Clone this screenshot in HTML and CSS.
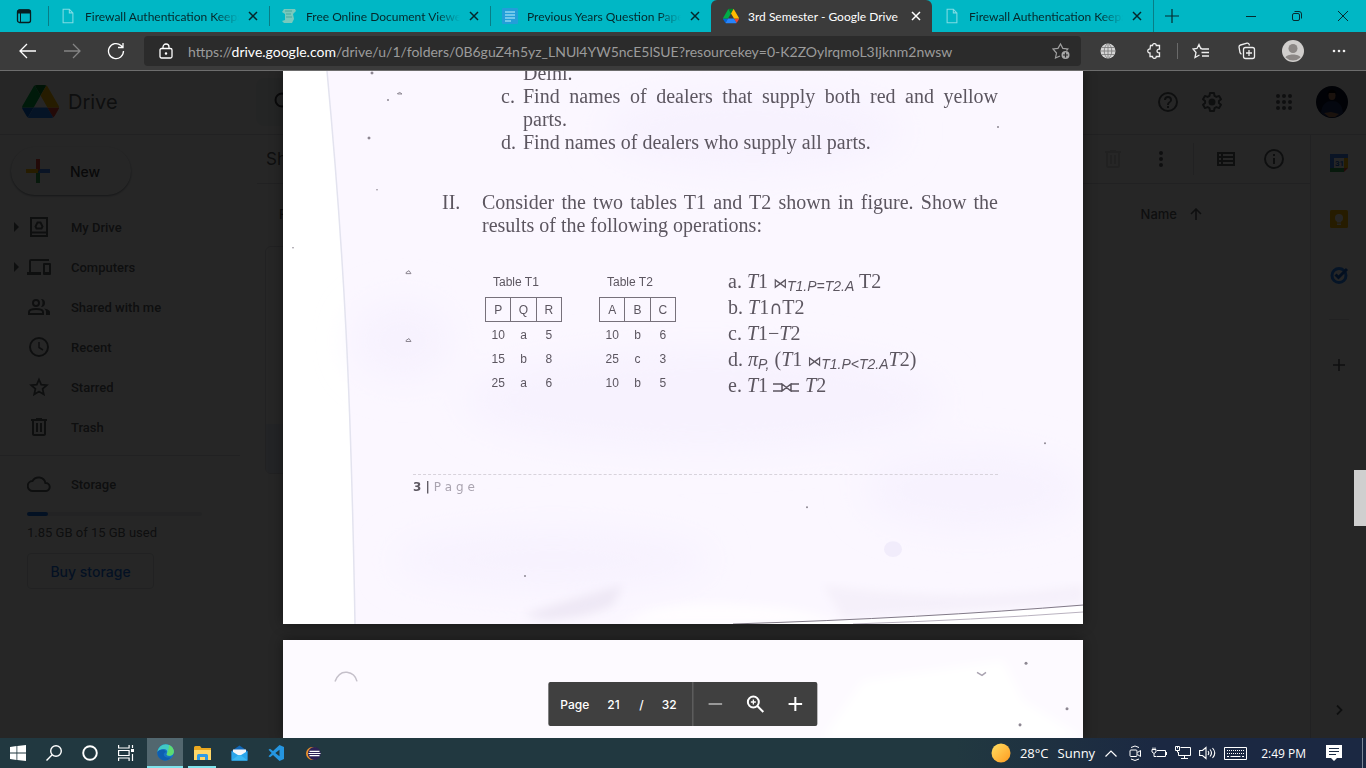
FILE: index.html
```html
<!DOCTYPE html>
<html lang="en">
<head>
<meta charset="utf-8">
<title>3rd Semester - Google Drive</title>
<meta name="viewport" content="width=device-width, initial-scale=1">
<link rel="stylesheet" href="styles.css">
</head>
<body>
<svg class="defs" aria-hidden="true">
  <defs>
    <symbol id="x" viewBox="0 0 10 10"><path d="M1 1l8 8M9 1l-8 8" fill="none" stroke="currentColor" stroke-width="1.5"/></symbol>
    <symbol id="blank" viewBox="0 0 16 18"><path d="M2.5 1.5h7l4 4v11h-11zM9.500 1.500v4h4" fill="none" stroke="#7fdbe3" stroke-width="1.200"/></symbol>
    <symbol id="drive" viewBox="0 0 87 78">
      <path fill="#0066da" d="M6.600 66.850l3.850 6.650c.8 1.400 1.950 2.500 3.300 3.300l13.750-23.800H0c0 1.550.4 3.100 1.200 4.500z"/>
      <path fill="#00ac47" d="M43.650 25L29.900 1.200c-1.350.8-2.500 1.900-3.300 3.300L1.200 48.500A9.060 9.060 0 0 0 0 53h27.500z"/>
      <path fill="#ea4335" d="M73.550 76.800c1.350-.8 2.500-1.900 3.300-3.300l1.600-2.750L86.100 57.500c.8-1.400 1.200-2.950 1.200-4.500H59.800l5.850 11.500z"/>
      <path fill="#00832d" d="M43.650 25L57.400 1.200C56.050.4 54.500 0 52.900 0H34.400c-1.600 0-3.150.450-4.500 1.200z"/>
      <path fill="#2684fc" d="M59.800 53H27.500L13.750 76.800c1.350.8 2.900 1.200 4.500 1.200h50.800c1.600 0 3.150-.450 4.500-1.200z"/>
      <path fill="#ffba00" d="M73.400 26.500L60.700 4.500c-.8-1.400-1.950-2.500-3.300-3.300L43.650 25l16.150 28h27.450c0-1.550-.4-3.100-1.200-4.500z"/>
    </symbol>
    <symbol id="trash" viewBox="0 0 24 24"><path fill="currentColor" d="M15 4V3H9v1H4v2h1v13c0 1.100.9 2 2 2h10c1.100 0 2-.9 2-2V6h1V4zm2 15H7V6h10zM9 8h2v9H9zm4 0h2v9h-2z"/></symbol>
  </defs>
</svg>

<header class="browser">
  <nav class="tabs" aria-label="Tabs">
    <button class="tab-actions" aria-label="Tab actions"><svg width="16" height="16" viewBox="0 0 16 16"><rect x="1.500" y="2" width="13" height="12.500" rx="2" fill="none" stroke="#071e20" stroke-width="1.300"/><path d="M1 5.500V4a2.500 2.500 0 0 1 2.500-2.500h9A2.500 2.500 0 0 1 15 4v1.500z" fill="#071e20"/><path d="M4.500 5v9" stroke="#071e20"/></svg></button>
    <div class="tab"><svg class="fav"><use href="#blank"/></svg><a class="tab-title" href="#t1">Firewall Authentication Keepa</a><button class="close" aria-label="Close tab"><svg><use href="#x"/></svg></button></div>
    <div class="tab"><svg class="fav" viewBox="0 0 16 16"><path d="M3 1h11l1 2-2 2-1 1 1 5-2 4H3L1 13l3-1V6L1 4z" fill="#79c9bd"/><path d="M4 3h7M5 6h5M5 9h6" stroke="#4aa79c"/></svg><a class="tab-title" href="#t2">Free Online Document Viewe</a><button class="close" aria-label="Close tab"><svg><use href="#x"/></svg></button></div>
    <div class="tab"><svg class="fav" viewBox="0 0 16 16"><rect width="16" height="16" rx="1" fill="#229ed9"/><path d="M3 4h10M3 7h10M3 10h10M3 13h6" stroke="#8ad6ef" stroke-width="1.500"/></svg><a class="tab-title" href="#t3">Previous Years Question Pape</a><button class="close" aria-label="Close tab"><svg><use href="#x"/></svg></button></div>
    <div class="tab active"><svg class="fav"><use href="#drive"/></svg><a class="tab-title" href="#t4">3rd Semester - Google Drive</a><button class="close" aria-label="Close tab"><svg><use href="#x"/></svg></button></div>
    <div class="tab"><svg class="fav"><use href="#blank"/></svg><a class="tab-title" href="#t5">Firewall Authentication Keepa</a><button class="close" aria-label="Close tab"><svg><use href="#x"/></svg></button></div>
    <button class="new-tab" aria-label="New tab"><svg width="14" height="14" viewBox="0 0 14 14"><path d="M7 0v14M0 7h14" stroke="#052b2e" stroke-width="1.200"/></svg></button>
    <div class="win">
      <button aria-label="Minimize"><svg width="10" height="10" viewBox="0 0 10 10"><path d="M0 5.500h10" stroke="#052b2e"/></svg></button>
      <button aria-label="Restore"><svg width="10" height="10" viewBox="0 0 10 10" fill="none" stroke="#052b2e"><rect x=".5" y="2.500" width="7" height="7" rx="1.500"/><path d="M2.500.500H7A2.500 2.500 0 0 1 9.500 3v4.500"/></svg></button>
      <button aria-label="Close"><svg width="10" height="10" viewBox="0 0 10 10"><path d="M0 0l10 10M10 0L0 10" stroke="#052b2e"/></svg></button>
    </div>
  </nav>
  <div class="toolbar">
    <div class="navs">
      <button aria-label="Back"><svg width="18" height="16" viewBox="0 0 18 16" fill="none" stroke="#fff" stroke-width="1.300"><path d="M17 8H1.500M8 1L1 8l7 7"/></svg></button>
      <button aria-label="Forward"><svg width="18" height="16" viewBox="0 0 18 16" fill="none" stroke="#848484" stroke-width="1.300"><path d="M1 8h15.500M10 1l7 7-7 7"/></svg></button>
      <button aria-label="Refresh"><svg width="18" height="18" viewBox="0 0 18 18" fill="none" stroke="#fff" stroke-width="1.300"><path d="M16.500 9A7.500 7.500 0 1 1 14 3.500l1.500 1.500M16 1v4.500h-5"/></svg></button>
    </div>
    <div class="address">
      <svg width="14" height="16" viewBox="0 0 14 16" fill="none" stroke="#fff" stroke-width="1.300"><rect x="1" y="5.500" width="12" height="9.500" rx="1.500"/><path d="M4 5.500V4a3 3 0 0 1 6 0v1.500"/><circle cx="7" cy="10.500" r=".6" fill="#fff"/></svg>
      <div class="url" role="textbox" contenteditable="true" spellcheck="false" aria-label="Address">https://<b>drive.google.com</b>/drive/u/1/folders/0B6guZ4n5yz_LNUl4YW5ncE5lSUE?resourcekey=0-K2ZOylrqmoL3Ijknm2nwsw</div>
      <button aria-label="Add to favorites"><svg width="18" height="18" viewBox="0 0 18 18" fill="none" stroke="#a0a0a0" stroke-width="1.200"><path d="M8 14l-4.500 2 1-5L1 7l5-.6L8.500 2l2.300 4.400 5 .6-1.300 1.500"/><circle cx="13.500" cy="13" r="4" fill="#a8a8a8" stroke="none"/><path d="M13.500 10.500v5M11 13h5" stroke="#2b2b2b"/></svg></button>
    </div>
    <div class="exts">
      <button aria-label="Translate"><svg width="16" height="16" viewBox="0 0 16 16"><circle cx="8" cy="8" r="7.500" fill="#d5d5d5"/><path d="M0 8h16M8 0v16M1.500 4.500h13M1.500 11.500h13M8 0c-5 4-5 12 0 16M8 0c5 4 5 12 0 16" fill="none" stroke="#777" stroke-width=".8"/></svg></button>
      <button aria-label="Extensions"><svg width="16" height="16" viewBox="0 0 16 16" fill="none" stroke="#eee" stroke-width="1.300"><path d="M4.500 2.500h2a1.900 1.900 0 0 1 3.800 0h3.200v3.700a1.900 1.900 0 1 0 0 3.600v3.700h-3.200a1.900 1.900 0 0 1-3.800 0h-2.500V9.800H3a1.900 1.900 0 0 1 0-3.600h1z"/></svg></button>
      <i class="sep"></i>
      <button aria-label="Favorites"><svg width="18" height="16" viewBox="0 0 18 16" fill="none" stroke="#eee" stroke-width="1.300"><path d="M10 5.500H8.700L7 1.500 5 5.500 1 6l3 3.500-1 5 4.500-2.500M9.500 6H17M9.500 9.500H17M10 13h7"/></svg></button>
      <button aria-label="Collections"><svg width="18" height="18" viewBox="0 0 18 18" fill="none" stroke="#eee" stroke-width="1.300"><rect x="5.500" y="5.500" width="11" height="11" rx="2"/><path d="M11 8v6M8 11h6M3.500 12A2 2 0 0 1 2 10.500L1 5a2 2 0 0 1 1.500-2L9 1.200a2 2 0 0 1 2.200 1.300l.3 1"/></svg></button>
      <button aria-label="Profile"><svg width="22" height="22" viewBox="0 0 22 22"><circle cx="11" cy="11" r="11" fill="#d0cecc"/><circle cx="11" cy="8.500" r="4.500" fill="#8b8785"/><path d="M3.500 17.500c1-4 14-4 15 0a11 11 0 0 1-15 0" fill="#8b8785"/></svg></button>
      <button aria-label="Settings and more"><svg width="14" height="4" viewBox="0 0 14 4" fill="#eee"><circle cx="2" cy="2" r="1.300"/><circle cx="7" cy="2" r="1.300"/><circle cx="12" cy="2" r="1.300"/></svg></button>
    </div>
  </div>
</header>

<main class="stage">
  <div class="drive">
    <header class="d-head">
      <a class="brand" href="#drive-home"><svg width="37" height="33"><use href="#drive"/></svg><span>Drive</span></a>
      <label class="search"><svg width="20" height="20" viewBox="0 0 20 20" fill="none" stroke="#3c4043" stroke-width="2"><circle cx="8" cy="8" r="6.500"/><path d="M13 13l6 6"/></svg><input type="search" aria-label="Search in Drive"></label>
      <div class="d-actions">
        <button aria-label="Help"><svg width="24" height="24" viewBox="0 0 24 24"><path fill="currentColor" d="M11 18h2v-2h-2zm1-16a10 10 0 1 0 0 20 10 10 0 0 0 0-20zm0 18a8 8 0 1 1 0-16 8 8 0 0 1 0 16zm0-14a4 4 0 0 0-4 4h2a2 2 0 1 1 4 0c0 2-3 1.750-3 5h2c0-2.250 3-2.500 3-5a4 4 0 0 0-4-4z"/></svg></button>
        <button aria-label="Settings"><svg width="24" height="24" viewBox="0 0 24 24"><path fill="none" stroke="currentColor" stroke-width="2" stroke-linejoin="round" d="M10 3h4l.5 2.800 1.900 1.100 2.700-1 1.900 3.300-2.100 1.800v2l2.100 1.800-1.900 3.300-2.700-1-1.900 1.100L14 21h-4l-.5-2.800-1.900-1.100-2.700 1L3 14.800 5.100 13v-2L3 9.200l1.900-3.300 2.700 1 1.900-1.100z"/><circle cx="12" cy="12" r="3.500" fill="currentColor"/></svg></button>
        <button class="apps" aria-label="Google apps"><svg width="24" height="24" viewBox="0 0 24 24" fill="currentColor"><circle cx="6" cy="6" r="2"/><circle cx="12" cy="6" r="2"/><circle cx="18" cy="6" r="2"/><circle cx="6" cy="12" r="2"/><circle cx="12" cy="12" r="2"/><circle cx="18" cy="12" r="2"/><circle cx="6" cy="18" r="2"/><circle cx="12" cy="18" r="2"/><circle cx="18" cy="18" r="2"/></svg></button>
        <button aria-label="Account"><svg width="32" height="32" viewBox="0 0 32 32"><circle cx="16" cy="16" r="16" fill="#0a1028"/><path d="M5 27c1-9 5-12 11-12s10 3 11 12a16 16 0 0 1-22 0" fill="#1c2f66"/><ellipse cx="16" cy="9.500" rx="3.500" ry="4.500" fill="#b07a5a"/><path d="M11.500 9c0-7 9-7 9 0l-1-2h-7z" fill="#000"/><path d="M8 27l7-1 8 2-4 3h-6z" fill="#b07a5a"/></svg></button>
      </div>
    </header>
    <aside class="side">
      <button class="new"><svg width="24" height="24" viewBox="0 0 24 24"><path fill="#ea4335" d="M10 0h4v12h-4z"/><path fill="#34a853" d="M10 12h4v12h-4z"/><path fill="#fbbc04" d="M0 10h12v4H0z"/><path fill="#4285f4" d="M14 10h10v4H12z"/></svg>New</button>
      <nav class="nav" aria-label="Drive">
        <a href="#my"><i class="caret"></i><svg viewBox="0 0 24 24"><path fill="none" stroke="currentColor" stroke-width="2" d="M4 3h16v18H4zM4 17.500h16"/><path fill="none" stroke="currentColor" stroke-width="2" d="M10.500 7.500h3l2 4-1 2h-5l-1-2z"/></svg>My Drive</a>
        <a href="#computers"><i class="caret"></i><svg viewBox="0 0 24 24"><path fill="currentColor" d="M4 6h18V4H4a2 2 0 0 0-2 2v11H0v3h14v-3H4zm19 2h-6a1 1 0 0 0-1 1v10a1 1 0 0 0 1 1h6a1 1 0 0 0 1-1V9a1 1 0 0 0-1-1zm-1 9h-4v-7h4z"/></svg>Computers</a>
        <a href="#shared"><svg viewBox="0 0 24 24"><g fill="none" stroke="currentColor" stroke-width="2"><circle cx="9" cy="8" r="3"/><path d="M2 19v-2c0-4 14-4 14 0v2z"/></g><path fill="currentColor" d="M14 4a4 4 0 1 1 0 8 6 6 0 0 0 0-8zm3 9.500c3 .5 6 1.500 6 3.500v3h-4v-3c0-1.500-.7-2.600-2-3.500z"/></svg>Shared with me</a>
        <a href="#recent"><svg viewBox="0 0 24 24" fill="none" stroke="currentColor" stroke-width="2"><circle cx="12" cy="12" r="9"/><path d="M12 7v5.500l4 2.500" stroke-width="1.500"/></svg>Recent</a>
        <a href="#starred"><svg viewBox="0 0 24 24"><path fill="none" stroke="currentColor" stroke-width="1.800" d="M12 4.500l2.200 5.200 5.600.5-4.200 3.700 1.200 5.500-4.800-2.900-4.800 2.900 1.200-5.500-4.200-3.700 5.600-.5z"/></svg>Starred</a>
        <a href="#trash-bin"><svg><use href="#trash"/></svg>Trash</a>
      </nav>
      <nav class="nav storage" aria-label="Storage">
        <a href="#storage"><svg viewBox="0 0 24 24"><path fill="none" stroke="currentColor" stroke-width="2" d="M6 19a5 5 0 0 1-.5-10A7 7 0 0 1 18.400 11 4 4 0 0 1 19 19z"/></svg>Storage</a>
        <div class="meter"><span></span></div>
        <p>1.85 GB of 15 GB used</p>
        <button class="buy">Buy storage</button>
      </nav>
    </aside>
    <section class="content">
      <div class="crumbs"><h1>Shared with me</h1>
        <div class="c-actions">
          <button class="faded" aria-label="Remove"><svg width="24" height="24"><use href="#trash"/></svg></button>
          <button aria-label="More actions"><svg width="24" height="24" viewBox="0 0 24 24" fill="currentColor"><circle cx="12" cy="6" r="2"/><circle cx="12" cy="12" r="2"/><circle cx="12" cy="18" r="2"/></svg></button>
          <i></i>
          <button aria-label="List layout"><svg width="24" height="24" viewBox="0 0 24 24"><path fill="currentColor" fill-rule="evenodd" d="M3 5h18v14H3zm2 2v2h2V7zm4 0v2h10V7zm-4 4v2h2v-2zm4 0v2h10v-2zm-4 4v2h2v-2zm4 0v2h10v-2z"/></svg></button>
          <button aria-label="View details"><svg width="24" height="24" viewBox="0 0 24 24"><path fill="currentColor" d="M11 7h2v2h-2zm0 4h2v6h-2zm1-9a10 10 0 1 0 0 20 10 10 0 0 0 0-20zm0 18a8 8 0 1 1 0-16 8 8 0 0 1 0 16z"/></svg></button>
        </div>
      </div>
      <div class="sort"><h2>Files</h2><button>Name<svg width="12" height="12" viewBox="0 0 12 12" fill="none" stroke="currentColor" stroke-width="1.600"><path d="M6 12V1M1 6l5-5 5 5"/></svg></button></div>
      <div class="card"><span></span></div>
    </section>
    <aside class="rail">
      <button aria-label="Calendar"><svg width="20" height="20" viewBox="0 0 20 20"><path fill="#4285f4" d="M1 1h18v4H5v10H1z"/><path fill="#fbbc04" d="M15 5h4v10h-4z"/><path fill="#34a853" d="M1 15h14v4H1z"/><path fill="#ea4335" d="M15 15h4l-4 4z"/><path fill="#fff" d="M5 5h10v10H5z"/><text x="6" y="13" font-family="Roboto" font-size="8" font-weight="700" fill="#1967d2">31</text></svg></button>
      <button aria-label="Keep"><svg width="20" height="20" viewBox="0 0 20 20"><rect x="1" y="1" width="18" height="18" rx="1.500" fill="#fbbc04"/><circle cx="10" cy="9" r="4" fill="#fff"/><path d="M8 12h4v1.500H8zM8 14.500h4V16H8z" fill="#fff"/></svg></button>
      <button aria-label="Tasks"><svg width="20" height="20" viewBox="0 0 20 20" fill="none"><circle cx="10" cy="10.500" r="7" stroke="#2684fc" stroke-width="3"/><path d="M6.500 9.500l3 3L18 4" stroke="#1a66d0" stroke-width="3"/></svg></button>
      <i></i>
      <button aria-label="Get add-ons"><svg width="20" height="20" viewBox="0 0 20 20"><path d="M10 4v12M4 10h12" stroke="currentColor" stroke-width="1.600"/></svg></button>
      <button class="hide" aria-label="Hide side panel"><svg width="20" height="20" viewBox="0 0 20 20" fill="none" stroke="currentColor" stroke-width="1.800"><path d="M8 5.500l4.500 4.500L8 14.500"/></svg></button>
    </aside>
  </div>
  <div class="scrim"></div>

  <div class="viewer">
    <article class="sheet first">
      <svg class="scan" viewBox="0 0 800 554" preserveAspectRatio="none" aria-hidden="true">
        <defs><filter id="soft" x="-30%" y="-30%" width="160%" height="160%"><feGaussianBlur stdDeviation="18"/></filter><filter id="fold"><feGaussianBlur stdDeviation="5"/></filter></defs>
        <path d="M44 0H800V554H72Q70 400 63 260T44 0z" fill="#fbf7ff"/>
        <g filter="url(#soft)" fill="#f7f2fe">
          <ellipse cx="470" cy="60" rx="150" ry="40"/><ellipse cx="120" cy="270" rx="50" ry="40"/><ellipse cx="420" cy="330" rx="240" ry="50"/><ellipse cx="270" cy="490" rx="160" ry="30"/><ellipse cx="690" cy="420" rx="110" ry="40"/>
        </g>
        <g filter="url(#fold)">
          <path d="M240 545Q300 525 340 515L330 535Q300 550 260 550z" fill="#eee8f5"/><path d="M340 554Q370 530 450 534T560 554z" fill="#fffdff"/><path d="M540 515Q680 535 800 515V532L560 548z" fill="#f5f0fa"/>
        </g>
        <path d="M460 554Q640 548 800 536V554z" fill="#fff"/>
        <path d="M44 0Q57 140 63 260T72 554" fill="none" stroke="#e3e3ef" stroke-width="1.500"/>
        <path d="M450 554Q640 548 800 535" fill="none" stroke="#817987"/><path d="M570 554Q690 550 800 542" fill="none" stroke="#b9b2bf"/>
        <g fill="#8d8792"><circle cx="89" cy="2" r="1.500"/><circle cx="86" cy="67" r="1.500"/><circle cx="105" cy="29" r="1"/><circle cx="94" cy="119" r=".8"/><circle cx="10" cy="177" r=".8"/><circle cx="715" cy="56" r="1"/><circle cx="762" cy="373" r="1"/><circle cx="524" cy="437" r="1"/><circle cx="242" cy="506" r="1"/></g>
        <path d="M114 23q3-3 5 0h-4M123 203h5l-2-3-3 2zM123 271h5l-2-3-3 2z" fill="none" stroke="#8d8792"/>
        <ellipse cx="610" cy="479" rx="9" ry="8" fill="#f1ecfb"/>
      </svg>
      <div class="paper">
        <ol class="questions">
          <li><span></span><p>Delhi.</p></li>
          <li><span>c.</span><p><span class="full">Find names of dealers that supply both red and yellow</span>parts.</p></li>
          <li><span>d.</span><p>Find names of dealers who supply all parts.</p></li>
        </ol>
        <div class="question"><span>II.</span><p><span class="full">Consider the two tables T1 and T2 shown in figure. Show the</span>results of the following operations:</p></div>
        <div class="figure">
          <table><caption>Table T1</caption><thead><tr><th>P</th><th>Q</th><th>R</th></tr></thead><tbody><tr><td>10</td><td>a</td><td>5</td></tr><tr><td>15</td><td>b</td><td>8</td></tr><tr><td>25</td><td>a</td><td>6</td></tr></tbody></table>
          <table><caption>Table T2</caption><thead><tr><th>A</th><th>B</th><th>C</th></tr></thead><tbody><tr><td>10</td><td>b</td><td>6</td></tr><tr><td>25</td><td>c</td><td>3</td></tr><tr><td>10</td><td>b</td><td>5</td></tr></tbody></table>
          <ol class="ops">
            <li>a. <em>T</em>1 <small>⋈</small><sub>T1.P=T2.A</sub> T2</li>
            <li>b. <em>T</em>1<span class="cap">∩</span>T2</li>
            <li>c. <em>T</em>1−<em>T</em>2</li>
            <li>d. <em>π</em><sub>P,</sub> (<em>T</em>1 <small>⋈</small><sub>T1.P&lt;T2.A</sub><em>T</em>2)</li>
            <li>e. <em>T</em>1 <svg width="27" height="9" viewBox="0 0 27 9" role="img" aria-label="full outer join"><path d="M0 1h9M0 8h9M9 1l9 7V1L9 8zM18 1h8M18 8h8" fill="none" stroke="#5c5660" stroke-width="1.500"/></svg> <em>T</em>2</li>
          </ol>
        </div>
        <footer class="pageno"><b>3 |</b> P a g e</footer>
      </div>
    </article>
    <article class="sheet second">
      <svg class="scan" viewBox="0 0 800 97" preserveAspectRatio="none" aria-hidden="true">
        <path d="M0 0H800V97H0z" fill="#fdfaff"/><path d="M540 97L580 40 720 20 740 60 800 97z" fill="#fff" filter="url(#fold)"/>
        <path d="M52 41q4-10 12-9t10 9" fill="none" stroke="#c5c0ca" stroke-width="1.500"/>
        <path d="M694 32l5 3 4-3" fill="none" stroke="#a9a3b0" stroke-width="1.500"/><g fill="#8d8792"><circle cx="743" cy="23" r="1.500"/><circle cx="784" cy="68" r="1.500"/><circle cx="737" cy="84" r="1.500"/></g>
      </svg>
    </article>
  </div>
  <div class="pager">
    <div class="pages"><label for="pg">Page</label><input id="pg" value="21"><span>/</span><span>32</span></div>
    <div class="zoom">
      <button aria-label="Zoom out"><svg width="14" height="14" viewBox="0 0 14 14"><path d="M0 7h14" stroke="#999" stroke-width="2"/></svg></button>
      <button aria-label="Fit to width"><svg width="18" height="18" viewBox="0 0 18 18" fill="none" stroke="#fff" stroke-width="2"><circle cx="7" cy="7" r="5.500"/><path d="M11 11l6 6"/><path d="M7 4.500v5M4.500 7h5" stroke-width="1.300"/></svg></button>
      <button aria-label="Zoom in"><svg width="14" height="14" viewBox="0 0 14 14"><path d="M0 7h14M7 0v14" stroke="#fff" stroke-width="2"/></svg></button>
    </div>
  </div>
  <div class="thumb"></div>
</main>

<footer class="taskbar">
  <nav class="task-apps" aria-label="Taskbar">
    <button aria-label="Start"><svg width="16" height="16" viewBox="0 0 16 16" fill="#fff"><path d="M0 2l6.500-.9v6.500H0zM7.300 1L16 0v7.600H7.300zM0 8.400h6.500v6.500L0 14zM7.300 8.400H16V16l-8.700-1z"/></svg></button>
    <button aria-label="Search"><svg width="16" height="16" viewBox="0 0 16 16" fill="none" stroke="#fff" stroke-width="1.400"><circle cx="10" cy="6" r="5.300"/><path d="M6.200 9.800L.5 15.500"/></svg></button>
    <button aria-label="Cortana"><svg width="16" height="16" viewBox="0 0 16 16"><circle cx="8" cy="8" r="6.800" fill="none" stroke="#fff" stroke-width="1.900"/></svg></button>
    <button aria-label="Task view"><svg width="16" height="16" viewBox="0 0 16 16" fill="none" stroke="#fff" stroke-width="1.200"><path d="M.6 0v3h10.500V0M.6 16v-3h10.500v3M.6 5.500h10.500v5H.6zM14.500 0v3M14.500 9v7"/><path d="M13 4h3v3h-3z" fill="#fff" stroke="none"/></svg></button>
    <button class="on" aria-label="Microsoft Edge"><svg width="17" height="17" viewBox="0 0 17 17"><circle cx="8.500" cy="8.500" r="8.300" fill="#1673c4"/><path d="M.5 8C1 3 5 .2 8.700.2c5 0 8.100 3.800 8.100 7.300 0 2.800-2 4.300-4.300 4.300-2 0-3.300-.9-2.700-2C11 8 10 5 7 5 3.500 5 1 6.500.5 8z" fill="#42c9c4"/><path d="M12 1c4 2 5 5 4.800 7-.4 2.500-2 3.800-4.300 3.800-2 0-3.300-.9-2.700-2C11 8 12 4 12 1z" fill="#5edb71"/><path d="M.5 8C2 5.500 8 4.500 9 8c-4 1-3 6.500 5 5.500-3 4-9 4-12 0C.5 11.500.3 10 .5 8z" fill="#0d5eb0"/></svg></button>
    <button class="open" aria-label="File Explorer"><svg width="17" height="15" viewBox="0 0 17 15"><path d="M0 1.500A1.500 1.500 0 0 1 1.500 0H6l1.500 2H17v12H0z" fill="#e9a820"/><path d="M0 4h17v10H0z" fill="#ffd768"/><path d="M3 14V9.500A1.500 1.500 0 0 1 4.500 8h8A1.500 1.500 0 0 1 14 9.500V14h-3v-3H6v3z" fill="#2f9be6"/></svg></button>
    <button aria-label="Mail"><svg width="17" height="16" viewBox="0 0 17 16"><path d="M.5 6L8.500.500l8 5.500v9.500H.5z" fill="#1067b7"/><path d="M2 4.500h13V10H2z" fill="#f2f5f8"/><path d="M.5 6l8 5 8-5v9.500H.5z" fill="#2aa5ea"/><path d="M.5 15.500l7-5.500h2l7 5.500z" fill="#3cb8f2"/></svg></button>
    <button aria-label="Visual Studio Code"><svg width="16" height="16" viewBox="0 0 16 16"><path d="M11.500 0L16 2v12l-4.500 2L5 10 2 12.200.5 11.300 3.700 8 .5 4.700 2 3.800 5 6zM11.500 4.700L7.300 8l4.200 3.300z" fill="#2596e1" fill-rule="evenodd"/></svg></button>
    <button aria-label="Eclipse"><svg width="15" height="15" viewBox="0 0 15 15"><circle cx="6.500" cy="7.500" r="6.500" fill="#f0932b"/><circle cx="8.300" cy="7.500" r="6.500" fill="#2c2255"/><path d="M3.500 5.300h10M2.500 7.500h12M3.500 9.700h10" stroke="#fff" stroke-width="1.200"/></svg></button>
  </nav>
  <div class="tray">
    <button class="weather"><svg width="20" height="20" viewBox="0 0 20 20"><defs><linearGradient id="sun" x2="1" y2="1"><stop stop-color="#ffe063"/><stop offset="1" stop-color="#ff9a1f"/></linearGradient></defs><circle cx="10" cy="10" r="9.500" fill="url(#sun)"/></svg><span>28°C</span><span>Sunny</span></button>
    <button aria-label="Show hidden icons"><svg width="12" height="7" viewBox="0 0 12 7" fill="none" stroke="#fff" stroke-width="1.200"><path d="M.5 6.500L6 1l5.500 5.500"/></svg></button>
    <button aria-label="Meet Now"><svg width="12" height="16" viewBox="0 0 12 16" fill="none" stroke="#fff"><rect x="1" y="5" width="7" height="6.500" rx="1"/><path d="M8.500 7.500l3-2v6l-3-2M2 2.500q4-3 8 0M2 14q4 3 8 0"/></svg></button>
    <button aria-label="Battery"><svg width="16" height="12" viewBox="0 0 16 12" fill="none" stroke="#fff"><path d="M6 3.500h8.500v6H5.500M15.500 5v3M1 2.500h4V5L3 6.500 1 5zM2 .5v2M4 .5v2M3 6.500v3h2"/></svg></button>
    <button aria-label="Network"><svg width="16" height="14" viewBox="0 0 16 14" fill="none" stroke="#fff"><path d="M5.500 1.500h10v8h-12V6M9.500 9.500v3M6 12.500h7M.5.500h4v4h-4zM2.500 4.500v2M2.500 .5v2"/></svg></button>
    <button aria-label="Volume"><svg width="17" height="14" viewBox="0 0 17 14" fill="none" stroke="#fff" stroke-width="1.100"><path d="M.6 4.500h2.900l3.500-3v11l-3.500-3H.6zM9 5q1.500 2 0 4M11 3.500q3 3.500 0 7M13.500 2q4.500 5 0 10"/></svg></button>
    <button class="kbd" aria-label="Touch keyboard"><svg width="23" height="13" viewBox="0 0 23 13" fill="none" stroke="#fff"><path d="M.5.500h22v12H.5z"/><path d="M3 3.500h17M3 6.500h17" stroke-dasharray="1 1"/><path d="M3 9.500h2M6.500 9.500h10M18 9.500h2"/></svg></button>
    <time>2:49 PM</time>
    <button class="note" aria-label="Notifications"><svg width="16" height="16" viewBox="0 0 16 16"><path d="M0 0h16v13h-5l-3 3-3-3H0z" fill="#fff"/><path d="M3 3.500h10M3 6.500h10M3 9.500h7" stroke="#1b2b42"/></svg></button>
    <button class="desk" aria-label="Show desktop"></button>
  </div>
</footer>
</body>
</html>
```
FILE: styles.css
```css
* { box-sizing: border-box; }
body {
  margin: 0;
  height: 100vh;
  display: flex;
  flex-direction: column;
  overflow: hidden;
  background: #262626;
  font-family: "Open Sans", "Noto Sans", sans-serif;
}
button { border: 0; padding: 0; background: none; font: inherit; color: inherit; display: flex; align-items: center; justify-content: center; }
svg { display: block; flex: none; }
a { color: inherit; text-decoration: none; }
ol { list-style: none; }
p, h1, h2, ol { margin: 0; padding: 0; }
.defs { position: absolute; width: 0; height: 0; }

/* Browser frame */
.tabs { display: flex; height: 32px; background: #00b7c5; color: #04282b; }
.tab-actions { width: 48px; }
.tab { flex: 0 1 221px; min-width: 0; display: flex; align-items: center; gap: 9px; padding: 0 11px 0 12px; position: relative; font-family: Lato, "Open Sans", sans-serif; font-size: 12px; }
.tab::before { content: ""; position: absolute; left: 0; top: 6px; height: 20px; border-left: 1px solid #087d86; }
.tab.active::before, .tab.active + .tab::before { display: none; }
.tab.active { background: #3b3b3b; color: #fff; border-radius: 6px 6px 0 0; }
.fav { width: 16px; height: 16px; }
.tab-title { flex: 1; overflow: hidden; white-space: nowrap; mask-image: linear-gradient(90deg, #000 85%, transparent); }
.tab.active .tab-title { mask-image: none; }
.close svg { width: 10px; height: 10px; }
.new-tab { width: 37px; border-left: 1px solid #087d86; }
.win { display: flex; margin-left: auto; }
.win button { width: 46px; }

.toolbar { display: flex; align-items: center; height: 39px; padding-right: 4px; background: #3b3b3b; border-bottom: 1px solid #6d6d6d; }
.navs { display: flex; padding: 0 6px; }
.navs button { width: 44px; height: 30px; }
.address { flex: 1; min-width: 0; display: flex; align-items: center; gap: 15px; height: 30px; padding: 0 11px 0 15px; border-radius: 4px; background: #2b2b2b; }
.url { flex: 1; min-width: 0; overflow: hidden; white-space: nowrap; font-family: Lato, "Open Sans", sans-serif; font-size: 14px; color: #9b9b9b; outline: 0; }
.url b { font-weight: 400; color: #fff; }
.exts { display: flex; align-items: center; margin-left: 4px; }
.exts button { width: 46px; height: 30px; }
.sep { height: 16px; border-left: 1px solid #6a6a6a; }

/* Drive, under the dark scrim */
.stage { flex: 1; min-height: 0; position: relative; overflow: hidden; }
.drive {
  height: 100%;
  display: grid;
  grid-template: 64px 1fr / 257px 1fr 56px;
  background: #fff;
  color: #5f6368;
  font-family: Roboto, sans-serif;
}
.d-head { grid-column: 1 / -1; display: flex; align-items: center; padding-bottom: 2px; border-bottom: 1px solid #dadce0; }
.brand { width: 256px; display: flex; align-items: center; gap: 9px; padding-left: 22px; font: 20px Inter, sans-serif; }
.search { flex: 0 1 720px; height: 48px; display: flex; align-items: center; gap: 16px; padding-left: 18px; border-radius: 8px; background: #f1f3f4; }
.search input { flex: 1; border: 0; background: none; }
.d-actions { margin-left: auto; display: flex; align-items: center; gap: 20px; padding-right: 18px; }
.apps { margin: 0 0 0 28px; }
.side { padding-top: 12px; }
.new { width: 120px; height: 48px; margin-left: 11px; gap: 20px; padding-right: 16px; border-radius: 24px; color: #3c4043; font: 500 14px Inter, sans-serif; box-shadow: 0 1px 2px #9aa0a6, 0 1px 3px #dadce0; }
.nav { padding-top: 12px; font-size: 13px; font-weight: 500; }
.nav a { display: flex; align-items: center; gap: 20px; height: 40px; padding-left: 27px; position: relative; }
.nav a svg { width: 24px; height: 24px; }
.caret { position: absolute; left: 14px; border: 5px solid transparent; border-left-color: #5f6368; border-right: 0; }
.storage { width: 240px; margin-top: 8px; padding-top: 8px; border-top: 1px solid #dadce0; }
.meter { height: 4px; margin: 8px 38px 0 27px; border-radius: 2px; background: #e8eaed; }
.meter span { display: block; width: 12%; height: 4px; border-radius: 2px; background: #1a73e8; }
.storage p { margin: 9px 0 12px 27px; font-weight: 400; line-height: 16px; }
.buy { width: 127px; height: 36px; margin-left: 27px; border: 1px solid #dadce0; border-radius: 4px; color: #1a73e8; font: 500 14px Inter, sans-serif; }
.content { min-width: 0; font-family: Inter, sans-serif; }
.crumbs { height: 49px; display: flex; align-items: center; justify-content: space-between; padding: 0 24px 0 9px; border-bottom: 1px solid #dadce0; }
.crumbs h1 { font-size: 17px; font-weight: 400; }
.c-actions { display: flex; align-items: center; gap: 24px; }
.c-actions i { height: 32px; margin: 0 -4px; border-left: 1px solid #dadce0; }
.faded { color: #ddd; }
.sort { height: 62px; display: flex; align-items: center; justify-content: space-between; padding: 0 108px 2px 22px; }
.sort h2, .sort button { font-size: 13px; font-weight: 500; }
.sort button { gap: 13px; }
.card { width: 224px; height: 228px; display: flex; align-items: flex-end; margin-left: 8px; border: 1px solid #dadce0; border-radius: 6px; overflow: hidden; }
.card span { width: 100%; height: 49px; background: #e8f0fe; }
.rail { display: flex; flex-direction: column; align-items: center; gap: 36px; padding: 18px 0; border-left: 1px solid #dadce0; }
.rail i { width: 20px; margin: -2px 0 -1px; border-top: 1px solid #dadce0; }
.hide { margin-top: auto; }
.scrim { position: absolute; inset: 0; background: rgba(0, 0, 0, .85); }

/* Document viewer */
.viewer { position: absolute; inset: 0; display: flex; flex-direction: column; align-items: center; gap: 16px; overflow: hidden; }
.sheet { position: relative; width: 800px; max-width: 100%; flex: none; overflow: hidden; background: #fff; box-shadow: 0 0 12px rgba(0, 0, 0, .4); }
.second { flex: 1; }
.scan { position: absolute; inset: 0; width: 100%; height: 100%; }
.paper { position: relative; padding: 0 85px 126px 130px; font: 20px/23px "Liberation Serif", serif; color: #5c5660; filter: blur(.4px); }
.questions { margin-top: -9px; padding-left: 88px; }
.questions li { display: grid; grid-template-columns: 22px 1fr; }
.full { display: block; text-align: justify; text-align-last: justify; white-space: nowrap; }
.question { display: grid; grid-template-columns: 40px 1fr; margin-top: 37px; padding-left: 29px; }
.figure { display: flex; padding-left: 72px; margin-top: 31px; }
.figure table { width: 77px; margin-right: 37px; align-self: flex-start; table-layout: fixed; border-collapse: collapse; font: 12px/22px "Liberation Sans", sans-serif; text-align: center; }
.figure caption { padding: 2px 0 3px 8px; text-align: left; white-space: nowrap; line-height: 24px; }
.figure th { height: 24px; padding: 0; border: 1px solid #77717b; font-weight: 400; }
.figure td { height: 24px; padding: 2px 0 0; }
.ops { margin-left: 15px; line-height: 26px; white-space: nowrap; }
.ops li { height: 26px; }
.ops svg { display: inline; }
.ops small { font: 14px "DejaVu Sans", sans-serif; }
.ops .cap { font: 18px/1 "DejaVu Sans", sans-serif; }
.ops sub { font: italic 14px/1 "Liberation Sans", sans-serif; vertical-align: -3px; }
.pageno { margin-top: 76px; padding-top: 1px; border-top: 1px dashed #d8d3dc; font: 12px/22px "DejaVu Sans", sans-serif; color: #aaa4b0; }
.pageno b { color: #5d5862; }

.pager { position: absolute; left: 50%; bottom: 12px; transform: translateX(-50%); display: flex; height: 44px; border-radius: 2px; background: #404040; color: #fff; font: 500 12px Inter, sans-serif; }
.pages { display: flex; align-items: center; gap: 18px; padding: 0 16px 0 12px; border-right: 1px solid #6b6b6b; }
.pages input { width: 14px; padding: 0; border: 0; background: none; color: inherit; font: inherit; outline: 0; }
.zoom { display: flex; padding: 0 2px; }
.zoom button { width: 40px; }
.thumb { position: absolute; right: 0; top: 399px; width: 12px; height: 56px; background: #cfcfcf; }

/* Windows taskbar */
.taskbar { display: flex; justify-content: space-between; height: 30px; background: linear-gradient(90deg, #213840 70%, #1b2842 85%); color: #fff; }
.task-apps { display: flex; }
.task-apps button { width: 36px; }
.task-apps .on { margin-left: 3px; background: #52676f; border-bottom: 2px solid #7fe3ec; }
.task-apps .on ~ button { margin-left: 1px; }
.task-apps .open { background: linear-gradient(#7fe3ec, #7fe3ec) center bottom / 28px 2px no-repeat; }
.tray { display: flex; align-items: center; font-size: 12px; }
.tray button { width: 24px; height: 30px; }
.tray .weather { width: auto; gap: 9px; padding-right: 4px; font-size: 13px; }
.tray .kbd { width: 32px; }
.tray time { margin-left: 10px; }
.tray .note { width: 56px; }
.tray .desk { width: 4px; border-left: 1px solid #7c8797; }
```
